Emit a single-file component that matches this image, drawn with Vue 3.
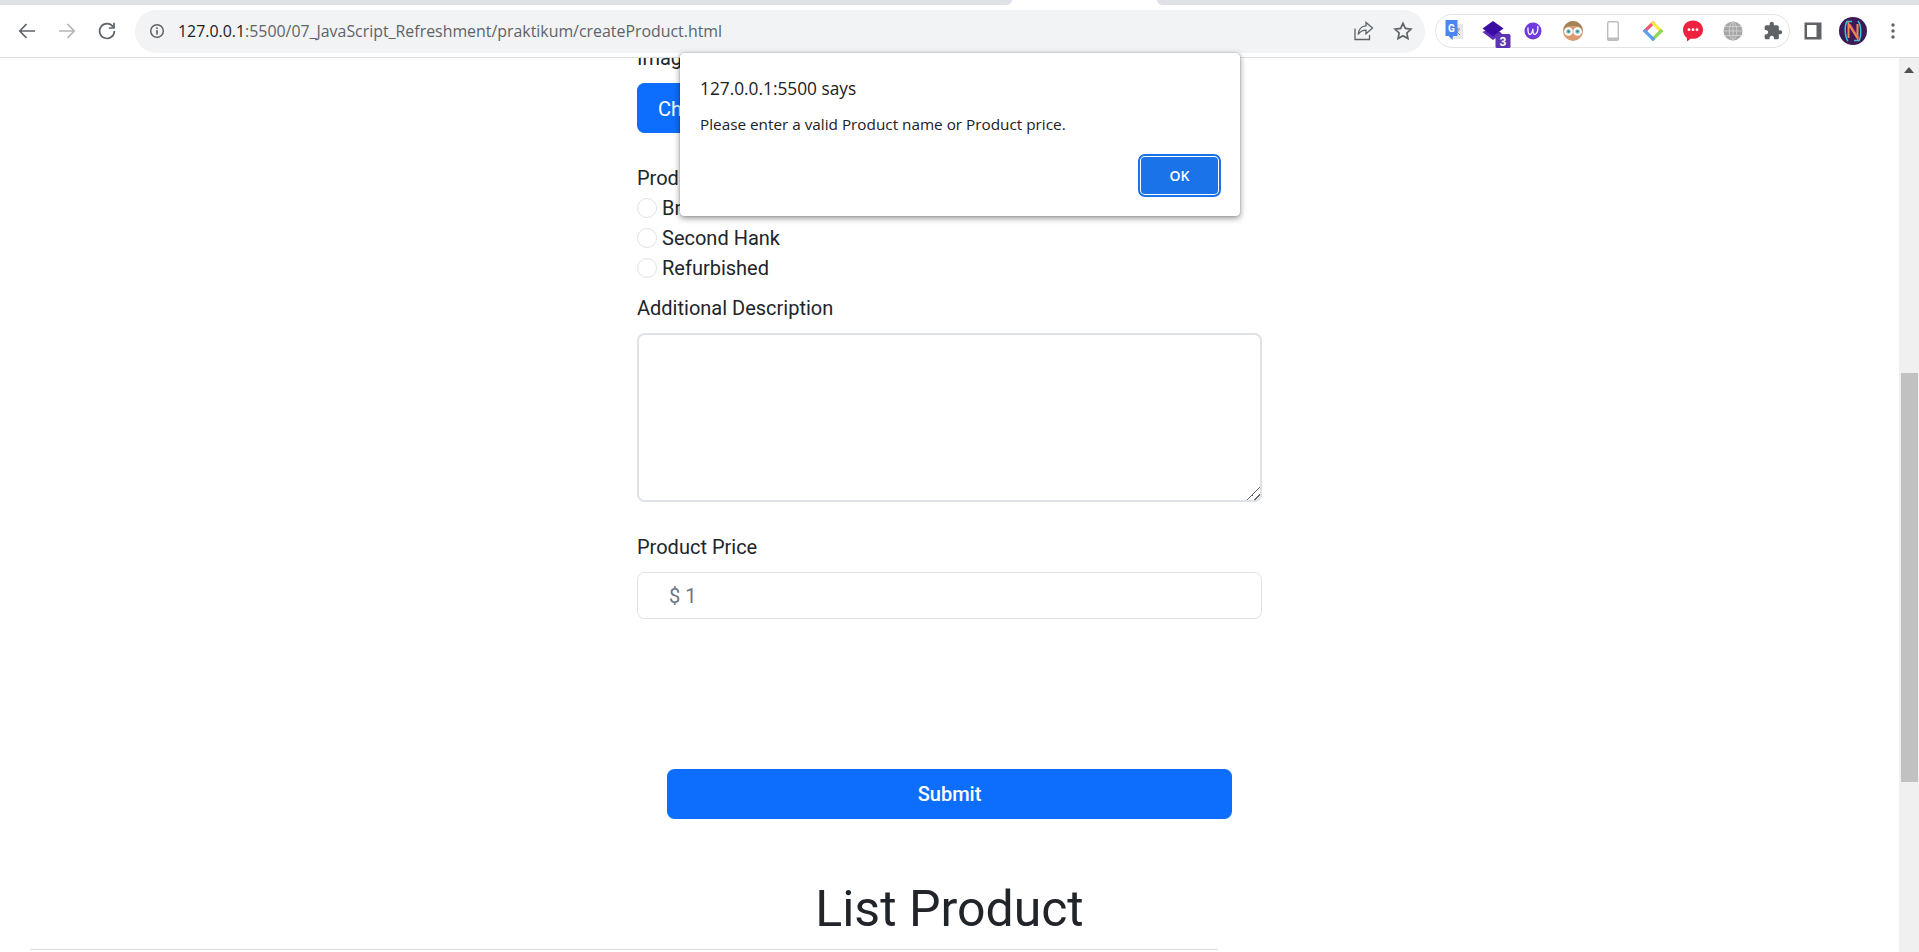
<script setup>
const address = { host: '127.0.0.1', rest: ':5500/07_JavaScript_Refreshment/praktikum/createProduct.html' }
const conditions = ['Brand New', 'Second Hank', 'Refurbished']
</script>

<template>
  <div class="browser">
    <div class="tabstrip">
      <div class="strip-left"></div>
      <div class="strip-tab"></div>
      <div class="strip-right"></div>
    </div>

    <header class="toolbar">
      <div class="nav-btn">
        <svg width="24" height="24" viewBox="0 0 24 24" fill="none" stroke="#5f6368" stroke-width="1.7"><path d="M20 12H5M11.5 5 4.8 12l6.7 7" /></svg>
      </div>
      <div class="nav-btn">
        <svg width="24" height="24" viewBox="0 0 24 24" fill="none" stroke="#b1b4b8" stroke-width="1.7"><path d="M4 12h15M12.500 5l6.700 7-6.700 7" /></svg>
      </div>
      <div class="nav-btn">
        <svg width="24" height="24" viewBox="0 0 24 24" fill="none" stroke="#5f6368" stroke-width="1.7"><path d="M18.200 8A7.400 7.400 0 1 0 19.400 12" /><path d="M19 3.800V9h-5.200" /></svg>
      </div>
      <div class="omnibox">
        <svg class="info" width="16" height="16" viewBox="0 0 16 16" fill="none"><circle cx="8" cy="8" r="6.300" stroke="#5f6368" stroke-width="1.500" /><rect x="7.200" y="7" width="1.600" height="4.600" fill="#5f6368" /><rect x="7.200" y="4.400" width="1.600" height="1.600" fill="#5f6368" /></svg>
        <div class="url"><span class="url-host">{{ address.host }}</span>{{ address.rest }}</div>
        <div class="nav-btn">
          <svg width="24" height="24" viewBox="0 0 24 24" fill="none" stroke="#5f6368" stroke-width="1.300"><path d="M4 9.500V20.500h14.500v-4.500" /><path d="M21.500 9 15 3.500v3.300C10.500 7 7.500 10.500 7.200 15.500c2-3.200 4.500-4.400 7.800-4.400v3.600z" /></svg>
        </div>
        <div class="nav-btn">
          <svg width="22" height="22" viewBox="0 0 24 24" fill="none" stroke="#5f6368" stroke-width="1.800"><path d="M12 3.600l2.600 5.600 6.100.7-4.500 4.200 1.200 6.100-5.400-3.100-5.400 3.100 1.200-6.100-4.500-4.200 6.100-.7z" /></svg>
        </div>
      </div>

      <div class="ext-pill">
        <div class="ext">
          <svg width="40" height="34" viewBox="0 0 40 34">
            <rect x="17" y="10" width="13" height="15" fill="#e8e8e8" />
            <path d="M21 15h6M24 14v2M22 21l4-5M23 17l4 4" stroke="#8a8a8a" stroke-width="1" fill="none" />
            <path d="M12.500 6h12v16H20l-.5 4-4-4h-3z" fill="#4a86f0" />
            <text x="18.500" y="17.500" text-anchor="middle" class="g">G</text>
          </svg>
        </div>
        <div class="ext">
          <svg width="40" height="34" viewBox="0 0 40 34">
            <path d="M9.500 18l10.500 8 9-6.500-9-6.500z" fill="#5a2bb8" />
            <path d="M20 7 30.500 14.500 20 22 9.500 14.500z" fill="#3a0ca3" />
            <rect x="22.500" y="20" width="15" height="14" rx="1.500" fill="#5e35b1" />
            <text x="30" y="31.500" text-anchor="middle" class="badge">3</text>
          </svg>
        </div>
        <div class="ext">
          <svg width="40" height="34" viewBox="0 0 40 34">
            <circle cx="20" cy="17" r="8.500" fill="#6f3bdc" />
            <path d="M15 13.500c-.3 3.800.5 7 1.900 7 1.400 0 2.500-3.200 3-5.700 0 2.900.5 5.700 1.800 5.700 2 0 4-4.400 3-8.500" fill="none" stroke="#fff" stroke-width="1.300" />
          </svg>
        </div>
        <div class="ext">
          <svg width="40" height="34" viewBox="0 0 40 34">
            <circle cx="20" cy="17" r="10" fill="#dc9a72" />
            <path d="M10 17a10 10 0 0 1 20 0c-2-4-4-5-10-5s-8 1-10 5z" fill="#a58358" />
            <circle cx="15.500" cy="17.500" r="3.400" fill="#9fdbe0" stroke="#fff" stroke-width="1.800" />
            <circle cx="24.500" cy="17.500" r="3.400" fill="#9fdbe0" stroke="#fff" stroke-width="1.800" />
            <circle cx="15.500" cy="17.500" r="1.300" fill="#3a7c86" />
            <circle cx="24.500" cy="17.500" r="1.300" fill="#3a7c86" />
          </svg>
        </div>
        <div class="ext">
          <svg width="40" height="34" viewBox="0 0 40 34">
            <rect x="14.700" y="7.700" width="10.600" height="18.600" rx="1.200" fill="#fff" stroke="#bdbdbd" stroke-width="1.400" />
            <rect x="14.700" y="23.500" width="10.600" height="2.800" fill="#bdbdbd" />
          </svg>
        </div>
        <div class="ext">
          <svg width="40" height="34" viewBox="0 0 40 34" fill="none" stroke-width="3.200" stroke-linecap="square">
            <path d="M12 17 20 9" stroke="#f2566f" />
            <path d="M20 9 28 17" stroke="#fbe74d" />
            <path d="M28 17 20 25" stroke="#8bd653" />
            <path d="M20 25 12 17" stroke="#5b9ff0" />
          </svg>
        </div>
        <div class="ext">
          <svg width="40" height="34" viewBox="0 0 40 34">
            <path d="M20 6.500c5.600 0 10 3.800 10 9.200 0 5.300-4.400 9.100-10 9.100h-2.500L14 27.500v-3.600c-2.500-1.700-4-4.700-4-8.200 0-5.400 4.400-9.200 10-9.200z" fill="#f0203f" />
            <circle cx="16" cy="15.700" r="1.400" fill="#fff" />
            <circle cx="20" cy="15.700" r="1.400" fill="#fff" />
            <circle cx="24" cy="15.700" r="1.400" fill="#fff" />
          </svg>
        </div>
        <div class="ext">
          <svg width="40" height="34" viewBox="0 0 40 34" fill="none">
            <circle cx="20" cy="17" r="9.500" fill="#a6a6a6" />
            <path d="M10.500 17h19M11.700 12.500h16.600M11.700 21.500h16.600M20 7.500v19M20 7.500c-5 3-5 16 0 19M20 7.500c5 3 5 16 0 19" stroke="#d6d6d6" stroke-width=".8" />
          </svg>
        </div>
        <div class="ext">
          <svg width="20" height="20" viewBox="0 0 24 24"><path fill="#5f6368" d="M20.500 11H19V7c0-1.100-.9-2-2-2h-4V3.500C13 2.120 11.880 1 10.500 1S8 2.120 8 3.500V5H4c-1.100 0-1.990.9-1.990 2v3.800H3.500c1.490 0 2.700 1.210 2.700 2.700s-1.210 2.700-2.700 2.700H2V20c0 1.100.9 2 2 2h3.800v-1.500c0-1.490 1.210-2.700 2.700-2.700 1.490 0 2.700 1.210 2.700 2.700V22H17c1.100 0 2-.9 2-2v-4h1.500c1.380 0 2.500-1.120 2.500-2.500S21.880 11 20.500 11z" /></svg>
        </div>
      </div>

      <div class="nav-btn first-after-pill">
        <svg width="24" height="24" viewBox="0 0 24 24"><path fill="#5f6368" fill-rule="evenodd" d="M3.500 3.500h17v17h-17zM6 6v12h9.500V6z" /></svg>
      </div>
      <div class="nav-btn">
        <svg width="30" height="30" viewBox="0 0 30 30" fill="none">
          <circle cx="15" cy="15" r="14" fill="#3b1a57" />
          <path d="M10 25C6.500 21 6.500 9 9 5.500h5" stroke="#35c6d8" stroke-width="1.500" />
          <path d="M20 5C23.500 9 23.500 21 21 24.500h-5" stroke="#35c6d8" stroke-width="1.500" />
          <path d="M10.500 22V8l9 14V8" stroke="#f58a4b" stroke-width="2" />
          <path d="M12 8l9 14" stroke="#e0559a" stroke-width="1" />
        </svg>
      </div>
      <div class="nav-btn">
        <svg width="6" height="18" viewBox="0 0 6 18"><circle cx="3" cy="3" r="1.700" fill="#5f6368" /><circle cx="3" cy="9" r="1.700" fill="#5f6368" /><circle cx="3" cy="15" r="1.700" fill="#5f6368" /></svg>
      </div>
    </header>

    <div class="viewport">
      <main class="page">
        <form class="form" @submit.prevent>
          <label class="field-label">Image</label>
          <button type="button" class="file-btn">Choose File</button>

          <div class="field-label condition-label">Product Condition</div>
          <div v-for="c in conditions" :key="c" class="radio-row">
            <span class="radio"></span>
            <span>{{ c }}</span>
          </div>

          <label class="field-label desc-label">Additional Description</label>
          <textarea class="textarea"></textarea>

          <label class="field-label price-label">Product Price</label>
          <div class="price-input">$ 1</div>

          <button type="button" class="submit">Submit</button>
        </form>

        <h1 class="title">List Product</h1>
        <div class="rule"></div>
      </main>

      <aside class="scrollbar">
        <svg class="arrow" width="10" height="6" viewBox="0 0 10 6"><path d="M5 0 10 6H0z" fill="#505050" /></svg>
        <div class="thumb"></div>
      </aside>
    </div>

    <div class="dialog" role="alertdialog">
      <div class="dialog-title">127.0.0.1:5500 says</div>
      <div class="dialog-msg">Please enter a valid Product name or Product price.</div>
      <div class="dialog-actions">
        <button type="button" class="ok">OK</button>
      </div>
    </div>
  </div>
</template>

<style>
html, body { margin: 0; overflow: hidden; background: #fff; }
</style>

<style scoped>
.browser {
  position: relative;
  height: 952px;
  width: 1919px;
  overflow: hidden;
  display: flex;
  flex-direction: column;
  font-family: Roboto, "Liberation Sans", sans-serif;
  color: #212529;
  background: #fff;
}
.tabstrip { display: flex; height: 5px; flex: none; }
.strip-left { width: 1012px; background: #dee1e6; border-bottom-right-radius: 5px; }
.strip-tab { width: 145px; background: #fff; }
.strip-right { flex: 1; background: #dee1e6; border-bottom-left-radius: 5px; }

.toolbar {
  flex: none;
  height: 52px;
  display: flex;
  align-items: center;
  padding-left: 7px;
  border-bottom: 1px solid #dadce0;
  background: #fff;
  box-sizing: content-box;
}
.nav-btn {
  flex: none;
  width: 40px;
  height: 40px;
  display: flex;
  align-items: center;
  justify-content: center;
}
.omnibox {
  margin-left: 8px;
  width: 1290px;
  height: 43px;
  box-sizing: border-box;
  border-radius: 22px;
  background: #f1f3f4;
  display: flex;
  align-items: center;
  padding-left: 14px;
  padding-right: 2px;
  flex: none;
}
.info { flex: none; }
.url {
  flex: 1;
  margin-left: 13px;
  font-family: "Open Sans", sans-serif;
  font-size: 15.900px;
  color: #5f6368;
  white-space: nowrap;
}
.url-host { color: #202124; }

.ext-pill {
  flex: none;
  margin-left: 10px;
  width: 355px;
  height: 34px;
  box-sizing: border-box;
  border: 1.500px solid #e3e4e6;
  border-radius: 17px;
  display: flex;
  align-items: center;
  justify-content: center;
}
.ext {
  flex: none;
  width: 40px;
  height: 34px;
  display: flex;
  align-items: center;
  justify-content: center;
}
.ext svg { overflow: visible; }
.g { font: 700 10px Roboto, sans-serif; fill: #fff; }
.badge { font: 700 12px Roboto, sans-serif; fill: #fff; }
.first-after-pill { margin-left: 3px; }

.viewport { flex: 1; display: flex; min-height: 0; }
.page { flex: 1; min-width: 0; overflow: hidden; }
.form {
  width: 625px;
  margin: -15px auto 0;
  font-size: 20px;
  line-height: 30px;
}
.field-label { display: block; }
label.field-label { margin-bottom: 10px; }
.file-btn {
  display: block;
  height: 50px;
  padding: 2px 21px 0;
  border: 0;
  border-radius: 7.500px;
  background: #0d6efd;
  color: #fff;
  font: 400 20px/30px Roboto, sans-serif;
}
.condition-label { margin-top: 30px; }
.radio-row { display: flex; align-items: center; gap: 5px; height: 30px; }
.radio {
  width: 20px;
  height: 20px;
  box-sizing: border-box;
  border: 1.250px solid #dee2e6;
  border-radius: 50%;
}
.desc-label { margin-top: 10px; }
.textarea {
  display: block;
  width: 100%;
  height: 169px;
  box-sizing: border-box;
  margin: 0;
  border: 2.500px solid #dee2e6;
  border-radius: 7.500px;
  background: #fff;
  outline: none;
  resize: vertical;
}
.textarea::-webkit-resizer {
  background: linear-gradient(135deg, transparent 54%, #666 54%, #666 60%, transparent 60%, transparent 78%, #666 78%, #666 84%, transparent 84%);
}
.price-label { margin-top: 30px; }
.price-input {
  height: 47px;
  box-sizing: border-box;
  border: 1.250px solid #dee2e6;
  border-radius: 7.500px;
  padding-left: 31px;
  line-height: 46.500px;
  color: #6c757d;
}
.submit {
  display: block;
  width: 565px;
  height: 50px;
  margin: 150px auto 0;
  border: 0;
  border-radius: 7.500px;
  background: #0d6efd;
  color: #fff;
  font: 500 20px/30px Roboto, sans-serif;
}
.title {
  margin: 60px 0 0;
  text-align: center;
  font-size: 50px;
  line-height: 60px;
  font-weight: 400;
}
.rule {
  margin: 10px 0 0 30px;
  width: 1188px;
  height: 1px;
  background: #dedede;
}

.scrollbar {
  flex: none;
  width: 20px;
  background: #f0f0f0;
  display: flex;
  flex-direction: column;
  align-items: center;
}
.arrow { margin-top: 9px; flex: none; }
.thumb {
  flex: none;
  width: 17px;
  height: 409px;
  margin-top: 300px;
  background: #c1c1c1;
}

.dialog {
  position: absolute;
  left: 680px;
  top: 53px;
  width: 560px;
  height: 163px;
  box-sizing: border-box;
  background: #fff;
  border-radius: 4px;
  padding: 26px 20px 0;
  box-shadow: 0 0 1px rgba(0,0,0,.5), 0 2px 6px rgba(0,0,0,.45);
  font-family: "Open Sans", sans-serif;
  color: #202124;
}
.dialog-title { font-size: 17.300px; line-height: 20px; }
.dialog-msg { font-size: 15.300px; line-height: 20px; margin-top: 15px; }
.dialog-actions { display: flex; justify-content: flex-end; margin-top: 21px; }
.ok {
  width: 81px;
  height: 41px;
  box-sizing: border-box;
  padding: 0;
  background: #1a73e8;
  border: 2px solid #fff;
  outline: 2px solid #1a73e8;
  outline-offset: -1px;
  border-radius: 6px;
  color: #fff;
  font: 600 14px "Open Sans", sans-serif;
}
</style>
